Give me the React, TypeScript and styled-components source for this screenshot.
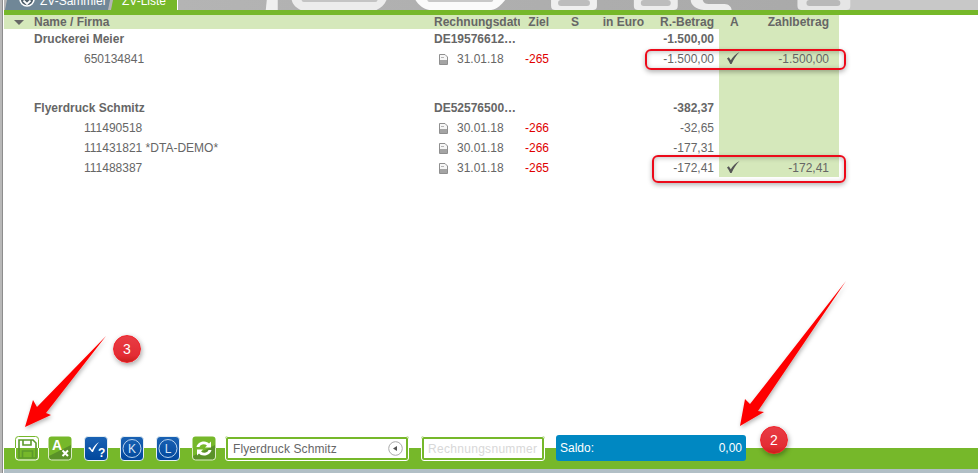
import React from 'react';
import styled, { createGlobalStyle } from 'styled-components';

const GlobalStyle = createGlobalStyle`
  html, body {
    margin: 0;
    padding: 0;
    background: #fff;
    overflow: hidden;
  }
`;

const Page = styled.div`
  position: relative;
  display: flex;
  width: 978px;
  height: 473px;
  overflow: hidden;
  font-family: "Liberation Sans", Arial, sans-serif;
  font-size: 12px;
  color: #666;
`;

const Rail = styled.div`
  flex: none;
  width: 3px;
  margin-right: 1px;
  background: linear-gradient(90deg, #b8b8b8 0, #b8b8b8 2px, #8d8d8d 2px);
`;

const Main = styled.div`
  flex: 1;
  min-width: 0;
  display: flex;
  flex-direction: column;
`;

const TopStrip = styled.div`
  flex: none;
  display: flex;
  height: 10px;
  background: #b5b5b5;
  overflow: hidden;
`;

const Tab = styled.div<{ $active?: boolean }>`
  flex: none;
  display: flex;
  align-items: flex-start;
  box-sizing: border-box;
  height: 10px;
  width: ${p => (p.$active ? '67px' : '105px')};
  margin-left: 1px;
  padding-left: ${p => (p.$active ? '11px' : '14px')};
  gap: 5px;
  line-height: 2px;
  font-size: 12px;
  color: #fff;
  white-space: nowrap;
  background: ${p => (p.$active ? '#76b82a' : '#708797')};
  clip-path: ${p =>
    p.$active
      ? 'polygon(2px 0, 100% 0, 100% 100%, 0 100%)'
      : 'polygon(2px 0, 100% 0, calc(100% - 2px) 100%, 0 100%)'};
  border-right: ${p => (p.$active ? '1px solid #fff' : 'none')};
`;

const TabDot = styled.svg`
  flex: none;
  margin-top: -9px;
`;

const Watermark = styled.svg`
  flex: 1;
  min-width: 0;
  height: 10px;
`;

const GreenBar = styled.div`
  flex: none;
  height: 5px;
  background: #76b82a;
`;

const Table = styled.div`
  flex: 1;
  min-height: 0;
  width: 835px;
`;

const columns = '430px 86px 30px 50px 45px 74px 31px 89px';

const HeaderRow = styled.div`
  display: grid;
  grid-template-columns: ${columns};
  align-items: center;
  height: 14px;
  background: #d5e8bb;
  font-weight: bold;
  line-height: 15px;
`;

const Row = styled.div<{ $bold?: boolean; $height?: number; $line?: number }>`
  display: grid;
  grid-template-columns: ${columns};
  height: ${p => p.$height ?? 20}px;
  line-height: ${p => p.$line ?? 23}px;
  font-weight: ${p => (p.$bold ? 'bold' : 'normal')};
`;

const Cell = styled.div<{ $align?: string; $pad?: number; $indent?: number; $shade?: boolean; $red?: boolean }>`
  min-width: 0;
  overflow: hidden;
  white-space: nowrap;
  text-align: ${p => p.$align ?? 'left'};
  padding-right: ${p => p.$pad ?? 0}px;
  padding-left: ${p => p.$indent ?? 0}px;
  background: ${p => (p.$shade ? '#d5e8bb' : 'transparent')};
  color: ${p => (p.$red ? '#e00000' : 'inherit')};
`;

const NameHeader = styled(Cell)`
  display: flex;
  align-items: center;
  gap: 10px;
  padding-left: 10px;
`;

const Caret = styled.span`
  width: 0;
  height: 0;
  border-left: 5px solid transparent;
  border-right: 5px solid transparent;
  border-top: 5px solid #666;
`;

const DateCell = styled(Cell)`
  display: flex;
  align-items: center;
  box-sizing: border-box;
  gap: 9px;
  padding-left: 5px;
  padding-top: 2px;
`;

const Check = styled.svg`
  display: block;
  margin-top: 3px;
`;

const Toolbar = styled.div`
  flex: none;
  display: flex;
  align-items: flex-start;
  box-sizing: border-box;
  height: 33px;
  padding-left: 11px;
  background: linear-gradient(180deg, #fff 0, #fff 12px, #76b82a 12px);
`;

const Tool = styled.button<{ $after: number }>`
  flex: none;
  width: 24px;
  height: 25px;
  padding: 0;
  border: none;
  background: none;
  margin-right: ${p => p.$after}px;
  display: block;
`;

const ComboBox = styled.div`
  flex: none;
  display: flex;
  align-items: center;
  box-sizing: border-box;
  width: 184px;
  height: 25px;
  padding: 0 3px 0 5px;
  margin-right: 12px;
  background: #fff;
  border: 3px solid #76b82a;
  border-radius: 3px;
  outline: 1px solid #fff;
  outline-offset: -1px;
`;

const ComboInput = styled.input`
  flex: 1;
  min-width: 0;
  padding: 0;
  border: none;
  outline: none;
  background: none;
  font: 12px "Liberation Sans", Arial, sans-serif;
  letter-spacing: 0.1px;
  color: #666;
`;

const NumberInput = styled(ComboInput)`
  flex: none;
  box-sizing: border-box;
  width: 124px;
  height: 25px;
  padding: 0 4px;
  margin-right: 11px;
  background: #fff;
  border: 3px solid #76b82a;
  border-radius: 3px;
  outline: 1px solid #fff;
  outline-offset: -1px;
  letter-spacing: 0.3px;

  &::placeholder {
    color: #d8d8d8;
    opacity: 1;
  }
`;

const SaldoBox = styled.div`
  flex: none;
  display: flex;
  justify-content: space-between;
  align-items: center;
  box-sizing: border-box;
  width: 190px;
  height: 26px;
  margin-top: -1px;
  padding: 0 4px;
  background: #0088c2;
  border-radius: 3px;
  color: #fff;
  font-size: 12px;
`;

const BottomStrip = styled.div`
  flex: none;
  height: 4px;
  background: #b1bfc6;
`;

const Highlight = styled.div<{ $left: number; $top: number; $width: number; $height: number }>`
  position: absolute;
  left: ${p => p.$left}px;
  top: ${p => p.$top}px;
  width: ${p => p.$width}px;
  height: ${p => p.$height}px;
  box-sizing: border-box;
  border: 2px solid #ec0a1a;
  border-radius: 6px;
  box-shadow: 0 2px 5px rgba(0, 0, 0, 0.3), inset 0 1px 5px rgba(0, 0, 0, 0.25);
`;

const Arrows = styled.svg`
  position: absolute;
  left: 0;
  top: 0;
  pointer-events: none;
`;

const Badge = styled.div<{ $left: number; $top: number }>`
  position: absolute;
  left: ${p => p.$left}px;
  top: ${p => p.$top}px;
  width: 28px;
  height: 28px;
  box-sizing: border-box;
  display: flex;
  align-items: center;
  justify-content: center;
  border-radius: 50%;
  border: 1px solid #f02028;
  background: linear-gradient(180deg, #e83c44 0, #e32c34 75%, #c8201c 100%);
  box-shadow: 1px 2px 5px rgba(0, 0, 0, 0.35);
  color: #fff;
  font-size: 14px;
`;

const DocIcon = () => (
  <svg width="9" height="11" viewBox="0 0 9 11" style={{ flex: 'none' }}>
    <path d="M.5.5h5.500l2.500 2.500v7.500h-8z" fill="#f6f6f6" stroke="#8f8f8f" />
    <path d="M1 6h7v4H1z" fill="#a4a4a4" />
    <path d="M2 3.500h3" stroke="#b5b5b5" />
  </svg>
);

const CheckIcon = () => (
  <Check width="14" height="14" viewBox="0 0 14 14">
    <path d="M1 7.500l1.800-1.200 2 3C6.500 6 9.500 3 13.500 1 10 4.500 7.500 8.500 5.600 13H4.200C3.300 10.800 2.200 9 1 7.500z" fill="#555" />
  </Check>
);

const SaveIcon = () => (
  <svg width="24" height="25" viewBox="0 0 24 25">
    <rect x=".5" y=".5" width="23" height="24" rx="3" fill="#fff" />
    <path d="M0 12h24v9a4 4 0 0 1-4 4H4a4 4 0 0 1-4-4z" fill="#76b82a" />
    <rect x=".5" y=".5" width="23" height="24" rx="3" fill="none" stroke="#76b82a" />
    <path d="M.5 12v9a3 3 0 0 0 3 3h17a3 3 0 0 0 3-3v-9" fill="none" stroke="#fff" />
    <path d="M4 4h14l3 3v15H4z" fill="none" stroke="#5c9a2b" strokeWidth="1.600" />
    <path d="M8 4v5h8V4M7.500 22v-7h10v7" fill="none" stroke="#5c9a2b" strokeWidth="1.600" />
  </svg>
);

const ClearIcon = () => (
  <svg width="24" height="25" viewBox="0 0 24 25">
    <rect x=".5" y=".5" width="23" height="24" rx="3" fill="#76b82a" />
    <path d="M1 20L23 9v12a3 3 0 0 1-3 3H4a3 3 0 0 1-3-3z" fill="#5a9228" />
    <path d="M.5 12v9a3 3 0 0 0 3 3h17a3 3 0 0 0 3-3v-9" fill="none" stroke="#dcecc6" />
    <text x="4" y="14" fontSize="14" fontWeight="bold" fontFamily="Liberation Sans" fill="#fff">A</text>
    <path d="M14.500 14.500l5.500 5.500M20 14.500L14.500 20" stroke="#fff" strokeWidth="2" />
  </svg>
);

const BlueFrame = ({ children }: { children: React.ReactNode }) => (
  <svg width="24" height="25" viewBox="0 0 24 25">
    <defs>
      <linearGradient id="blueFill" x1="0" y1="0" x2="0" y2="1">
        <stop offset="0" stopColor="#1a62b4" />
        <stop offset="1" stopColor="#00479c" />
      </linearGradient>
    </defs>
    <rect x=".5" y=".5" width="23" height="24" rx="3.500" fill="url(#blueFill)" stroke="#e4eef2" />
    {children}
  </svg>
);

const CheckHelpIcon = () => (
  <BlueFrame>
    <path d="M4 12l2-1 2 3c2-4 4-6 7-8-2.500 3-4.500 6-6 10H8c-1-1.500-2.500-3-4-4z" fill="#fff" />
    <text x="14" y="21" fontSize="12" fontWeight="bold" fontFamily="Liberation Sans" fill="#fff">?</text>
  </BlueFrame>
);

const LetterIcon = ({ letter }: { letter: string }) => (
  <BlueFrame>
    <circle cx="12" cy="12.500" r="9" fill="none" stroke="#b9d3ee" />
    <text x="12" y="17" fontSize="12" textAnchor="middle" fontFamily="Liberation Sans" fill="#d6e6f6">{letter}</text>
  </BlueFrame>
);

const RefreshIcon = () => (
  <svg width="24" height="25" viewBox="0 0 24 25">
    <rect x=".5" y=".5" width="23" height="24" rx="3" fill="#76b82a" />
    <path d="M1 20L23 9v12a3 3 0 0 1-3 3H4a3 3 0 0 1-3-3z" fill="#5a9228" />
    <path d="M.5 12v9a3 3 0 0 0 3 3h17a3 3 0 0 0 3-3v-9" fill="none" stroke="#dcecc6" />
    <path d="M4.500 11C5.500 7 9 5.500 12 5.500c2.500 0 4 1 5 2l2-2v6h-6l2-2c-2.500-2-6.500-1.500-7.500 1.500z" fill="#fff" />
    <path d="M19.500 14c-1 4-4.500 5.500-7.500 5.500-2.500 0-4-1-5-2l-2 2v-6h6l-2 2c2.500 2 6.500 1.500 7.500-1.500z" fill="#fff" />
  </svg>
);

const BackCircle = () => (
  <svg width="15" height="15" viewBox="0 0 15 15" style={{ flex: 'none' }}>
    <circle cx="7.500" cy="7.500" r="6.800" fill="#fff" stroke="#aaa" />
    <path d="M5 7.500l4-2.500v5z" fill="#555" />
  </svg>
);

type Invoice = {
  number: string;
  date: string;
  target: string;
  amount: string;
  paid?: string;
};

type Group = {
  name: string;
  tax: string;
  total: string;
  invoices: Invoice[];
};

const groups: Group[] = [
  {
    name: 'Druckerei Meier',
    tax: 'DE19576612…',
    total: '-1.500,00',
    invoices: [{ number: '650134841', date: '31.01.18', target: '-265', amount: '-1.500,00', paid: '-1.500,00' }],
  },
  {
    name: 'Flyerdruck Schmitz',
    tax: 'DE52576500…',
    total: '-382,37',
    invoices: [
      { number: '111490518', date: '30.01.18', target: '-266', amount: '-32,65' },
      { number: '111431821 *DTA-DEMO*', date: '30.01.18', target: '-266', amount: '-177,31' },
      { number: '111488387', date: '31.01.18', target: '-265', amount: '-172,41', paid: '-172,41' },
    ],
  },
];

const App: React.FC = () => {
  return (
    <Page>
      <GlobalStyle />
      <Rail />
      <Main>
        <TopStrip>
          <Tab>
            <TabDot width="16" height="16" viewBox="0 0 16 16">
              <circle cx="8" cy="8" r="7" fill="#4f5f6a" stroke="#fff" strokeWidth="1.600" />
              <path d="M4.500 9.500L8 13l3.500-3.500" fill="none" stroke="#fff" strokeWidth="1.800" />
            </TabDot>
            ZV-Sammler
          </Tab>
          <Tab $active>ZV-Liste</Tab>
          <Watermark viewBox="0 0 802 10" preserveAspectRatio="none">
            <defs>
              <linearGradient id="stripFill" x1="0" y1="0" x2="1" y2="0">
                <stop offset="0" stopColor="#b4b4b4" />
                <stop offset="1" stopColor="#a9a9a9" />
              </linearGradient>
            </defs>
            <rect width="668" height="10" fill="url(#stripFill)" />
            <rect x="668" width="134" height="10" fill="#c8c8c8" />
            <path d="M89 0h11v10H88z" fill="#f0f0f0" />
            <path d="M114 0h95c-2 5-6 8-10 10h-76c-4-2-8-5-9-10z" fill="#ececec" />
            <path d="M124 0h76c0 1-1 2-2 2h-72c-1 0-2-1-2-2z" fill="#c4c4c4" />
            <path d="M238 0h90c-4 5-8 9-14 10h-62c-6-1-11-5-14-10z" fill="#fafafa" />
            <path d="M250 0h66c0 1-1 2-2 2h-62c-1 0-2-1-2-2z" fill="#c8c8c8" />
            <path d="M374 0h46v6c0 3-2 4-4 4h-38c-2 0-4-1-4-4z" fill="#efefef" />
            <rect x="381" width="32" height="6" rx="3" fill="#bdbdbd" />
            <path d="M457 0h44v6c0 3-2 4-4 4h-36c-2 0-4-1-4-4z" fill="#ececec" />
            <rect x="464" width="30" height="6" rx="3" fill="#bdbdbd" />
            <path d="M514 0h12c1 3 3 4 6 4h16c4 0 7 3 7 6h-28c-8-1-13-5-13-10z" fill="#ececec" />
            <path d="M621 0h53v6c0 3-2 4-4 4h-45c-2 0-4-1-4-4z" fill="#e6e6e6" />
            <rect x="630" width="34" height="6" rx="3" fill="#b9b9b9" />
          </Watermark>
        </TopStrip>
        <GreenBar />
        <Table>
          <HeaderRow>
            <NameHeader><Caret />Name / Firma</NameHeader>
            <Cell>Rechnungsdatum</Cell>
            <Cell $align="right" $pad={1}>Ziel</Cell>
            <Cell $align="center">S</Cell>
            <Cell $align="right" $pad={1}>in Euro</Cell>
            <Cell $align="right" $pad={5}>R.-Betrag</Cell>
            <Cell $indent={11}>A</Cell>
            <Cell $align="right" $pad={10}>Zahlbetrag</Cell>
          </HeaderRow>
          {groups.map((group, index) => (
            <React.Fragment key={group.name}>
              {index > 0 && (
                <Row $height={29}>
                  <Cell style={{ gridColumn: '1 / 7' }} />
                  <Cell $shade />
                  <Cell $shade />
                </Row>
              )}
              <Row $bold $height={index === 0 ? 19 : 20} $line={index === 0 ? 21 : 23}>
                <Cell $indent={30}>{group.name}</Cell>
                <Cell>{group.tax}</Cell>
                <Cell />
                <Cell />
                <Cell />
                <Cell $align="right" $pad={5}>{group.total}</Cell>
                <Cell $shade />
                <Cell $shade />
              </Row>
              {group.invoices.map(invoice => (
                <Row key={invoice.number}>
                  <Cell $indent={80}>{invoice.number}</Cell>
                  <DateCell><DocIcon />{invoice.date}</DateCell>
                  <Cell $align="right" $red $pad={1}>{invoice.target}</Cell>
                  <Cell />
                  <Cell />
                  <Cell $align="right" $pad={5}>{invoice.amount}</Cell>
                  <Cell $shade $indent={7}>{invoice.paid && <CheckIcon />}</Cell>
                  <Cell $shade $align="right" $pad={10}>{invoice.paid}</Cell>
                </Row>
              ))}
            </React.Fragment>
          ))}
        </Table>
        <Toolbar>
          <Tool $after={9}><SaveIcon /></Tool>
          <Tool $after={12}><ClearIcon /></Tool>
          <Tool $after={12}><CheckHelpIcon /></Tool>
          <Tool $after={12}><LetterIcon letter="K" /></Tool>
          <Tool $after={12}><LetterIcon letter="L" /></Tool>
          <Tool $after={9}><RefreshIcon /></Tool>
          <ComboBox>
            <ComboInput defaultValue="Flyerdruck Schmitz" />
            <BackCircle />
          </ComboBox>
          <NumberInput placeholder="Rechnungsnummer" />
          <SaldoBox>
            <span>Saldo:</span>
            <span>0,00</span>
          </SaldoBox>
        </Toolbar>
        <BottomStrip />
      </Main>
      <Highlight $left={645} $top={49} $width={201} $height={21} />
      <Highlight $left={652} $top={155} $width={194} $height={28} />
      <Arrows width="978" height="473" viewBox="0 0 978 473">
        <defs>
          <filter id="arrowShadow" x="-20%" y="-20%" width="140%" height="140%">
            <feDropShadow dx="1" dy="2" stdDeviation="2" floodColor="#000" floodOpacity="0.3" />
          </filter>
        </defs>
        <g fill="#fe0000" filter="url(#arrowShadow)">
          <path d="M740 426L745 399 750 404 846 281 758 411 764 412z" />
          <path d="M25 427L33 400 37 407 106 336 46 413 51 415z" />
        </g>
      </Arrows>
      <Badge $left={113} $top={335}>3</Badge>
      <Badge $left={760} $top={426}>2</Badge>
    </Page>
  );
};

export default App;
